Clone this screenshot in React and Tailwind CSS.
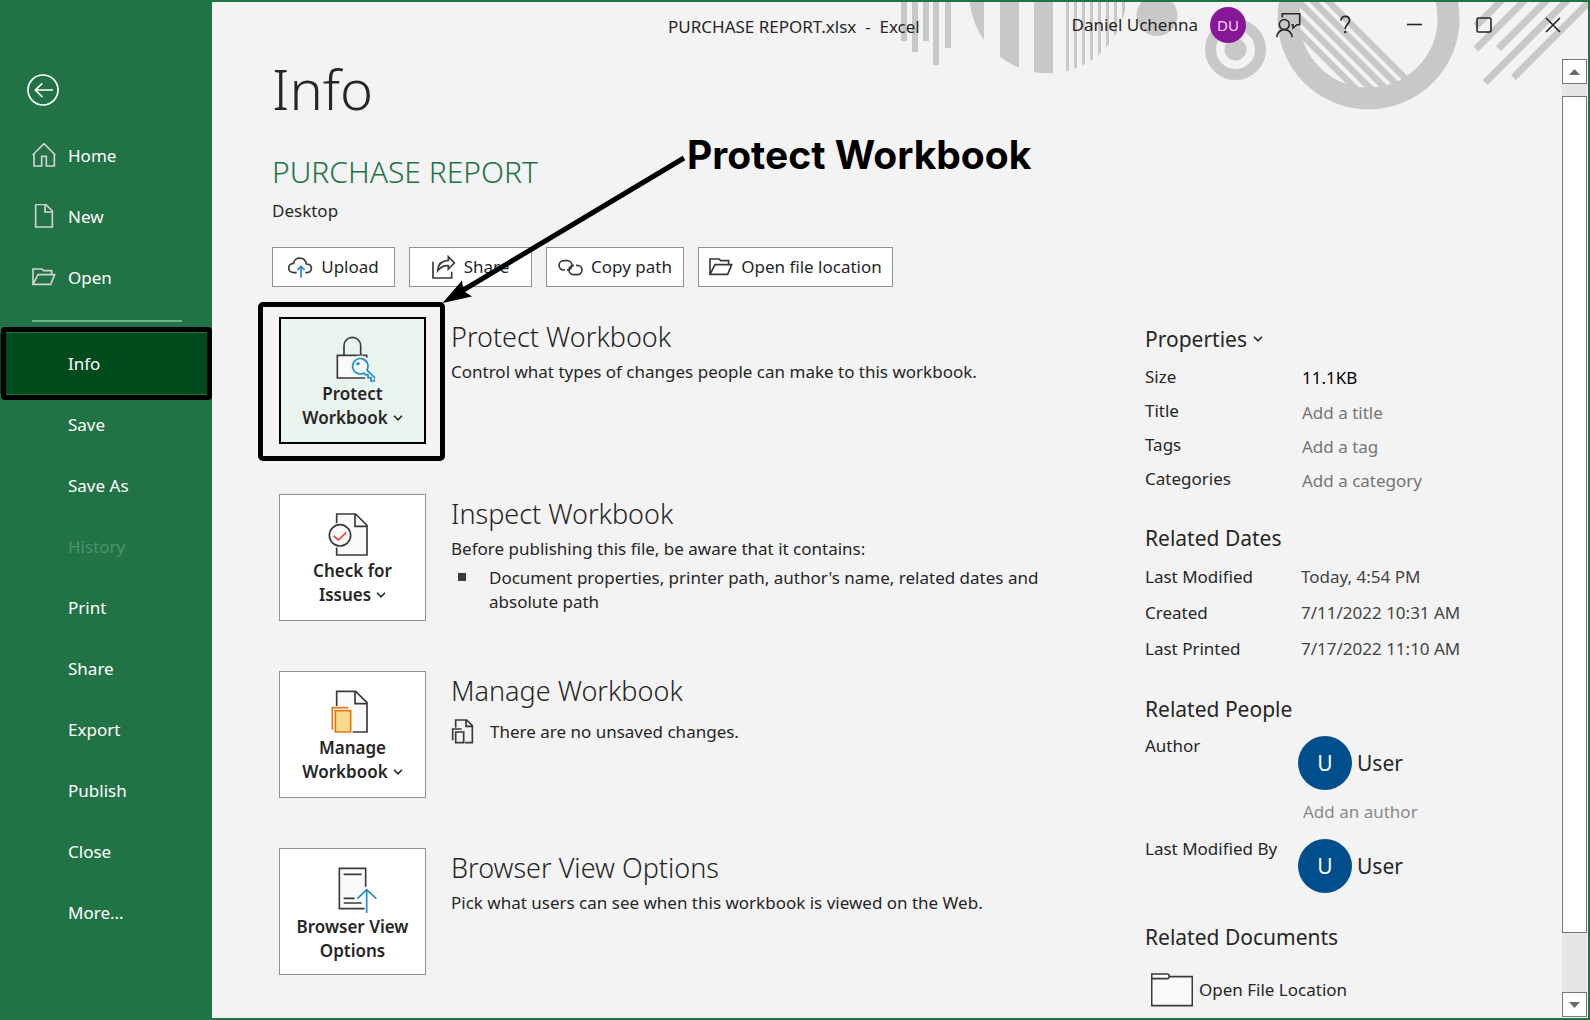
import React from "react";

const INK = "#3b3a39";

function Icon({ box, w, h, children, stroke = INK, sw = 5, className = "" }) {
  return (
    <svg
      viewBox={box}
      width={w}
      height={h}
      fill="none"
      stroke={stroke}
      strokeWidth={sw}
      className={"shrink-0 " + className}
      aria-hidden="true"
    >
      {children}
    </svg>
  );
}

const Chevron = ({ className = "" }) => (
  <svg viewBox="0 0 10 6" width="10" height="6" fill="none" stroke="#262626" strokeWidth="1.6" className={"inline-block align-middle " + className} aria-hidden="true">
    <path d="M1 .8l4 4 4-4" />
  </svg>
);

const BackIcon = () => (
  <Icon box="21 12 96 96" w={32} h={32} stroke="#fff" sw={5}>
    <circle cx="69" cy="60" r="45" />
    <path d="M46 60H99M67 40L46 60L67 81" />
  </Icon>
);
const HomeIcon = () => (
  <Icon box="36 221 72 72" w={24} h={24} stroke="#d2d2d2">
    <path d="M38 257L72 223L106 257M42 253V290H65V261H79V290H103V253" />
  </Icon>
);
const NewIcon = () => (
  <Icon box="36 404 72 72" w={24} h={24} stroke="#d2d2d2">
    <path d="M47 405H77L97 425V473H47ZM75 405V428H97" />
  </Icon>
);
const FolderOpenIcon = ({ stroke = INK }) => (
  <Icon box="1322 53 72 54" w={24} h={18} stroke={stroke}>
    <path d="M1325 102V56H1352L1357 61H1381V72M1325 102L1340 73H1390L1378 102Z" />
  </Icon>
);
const UploadIcon = () => (
  <Icon box="59 56 75 63" w={25} h={21}>
    <path d="M85 103H77C56 103 56 75 76 75C78 54 110 54 114 77C134 77 134 103 116 103H111" fill="#fafafa" />
    <path d="M98 118V84M87 95L98 84L109 95" stroke="#1e8bcd" />
  </Icon>
);
const ShareIcon = () => (
  <Icon box="491 46 72 72" w={24} h={24}>
    <path d="M494 66V115H550V96" />
    <path d="M508 93C509 72 522 63 540 62V51L558 70L540 88V78C524 77 516 83 508 93Z" />
  </Icon>
);
const LinkIcon = () => (
  <Icon box="865 55 75 51" w={25} h={17}>
    <path d="M886 88H882a14 14 0 0 1 0-28h11a14 14 0 0 1 14 14c0 8-6 14-15 14" />
    <path d="M919 74h4a14 14 0 0 1 0 28h-11a14 14 0 0 1-14-14c0-8 6-14 15-14" />
  </Icon>
);
const LockIcon = () => (
  <Icon box="189 286 132 138" w={44} h={46}>
    <path d="M228 343V315a25 25 0 0 1 50 0V343" />
    <path d="M291 412H208V344H296V352" fill="#fafafa" />
    <path d="M252 376a25 25 0 1 1 46 13L323 412V422H309V411H300V402H292L287 399A25 25 0 0 1 252 376Z" fill="#fafafa" stroke="#e9f4ee" strokeWidth="12" />
    <path d="M254 376a23 23 0 1 1 43 12L321 412V421H309V411H300V402H292L288 397A23 23 0 0 1 254 376Z" fill="#fafafa" stroke="#1e8bcd" />
    <circle cx="270" cy="369" r="5" fill="#1e8bcd" stroke="none" />
  </Icon>
);
const CheckDocIcon = () => (
  <Icon box="232 97 150 132" w={50} h={44}>
    <path d="M258 100H315L349 134V223H258Z" fill="#fafafa" />
    <path d="M313 100V137H349" />
    <circle cx="268" cy="164" r="38" fill="#fff" stroke="none" />
    <circle cx="268" cy="164" r="32" fill="#fafafa" />
    <path d="M249 165L263 178L287 155" stroke="#ee4444" />
  </Icon>
);
const ManageDocIcon = () => (
  <Icon box="232 628 150 132" w={50} h={44}>
    <path d="M258 632H315L349 666V754H258Z" fill="#fafafa" />
    <path d="M313 632V669H349" />
    <path d="M240 676H306V760H240Z" fill="#fff" stroke="none" />
    <path d="M245 747V681H293" stroke="#e07a10" />
    <path d="M254 690H300V754H254Z" fill="#f8da8f" stroke="#e07a10" />
  </Icon>
);
const BrowserIcon = () => (
  <Icon box="244 259 126 138" w={42} h={46} className="overflow-visible">
    <path d="M345 318V263H266V384H342" fill="#fafafa" />
    <path d="M279 281H333M279 353H312M279 367H333" />
    <path d="M348 397V328M320 354L348 327L377 354" stroke="#1e8bcd" />
  </Icon>
);
const DraftsIcon = () => (
  <Icon box="603 716 69 75" w={23} h={25}>
    <path d="M617 742V719H650L667 736V787H645M648 719V738H667" />
    <path d="M617 755H641V787H617ZM608 780V746H635" />
  </Icon>
);
const FolderIcon = () => (
  <Icon box="63 876 126 102" w={42} h={34}>
    <path d="M65 879H112Q118 879 118 887H187V974H65Z" fill="#fafafa" />
    <path d="M65 893H112Q117 893 118 887" />
  </Icon>
);

function TitleArt() {
  const thin = [1066, 1074, 1082, 1090, 1098, 1106, 1114, 1122];
  return (
    <svg viewBox="890 2 698 110" width="698" height="110" className="pointer-events-none absolute right-0 top-0" fill="#c8c8c8" aria-hidden="true">
      <defs>
        <clipPath id="disc"><circle cx="1048" cy="-5.3" r="78.5" /></clipPath>
        <clipPath id="inner"><circle cx="1368.5" cy="18.5" r="70" /></clipPath>
      </defs>
      <path d="M901 0h6v41h-6zM912 0h6v52h-6zM923 0h6v41h-6zM933 0h6v65h-6zM945 0h6v48h-6z" />
      <g clipPath="url(#disc)">
        <path d="M960 0h24v80h-24zM1000 0h19v80h-19zM1034 0h19v80h-19z" />
        {thin.map((x) => <rect key={x} x={x} y="0" width="3" height="80" />)}
      </g>
      <circle cx="1157" cy="15.5" r="20.5" />
      <circle cx="1235.5" cy="49.5" r="25" fill="none" stroke="#c8c8c8" strokeWidth="11" />
      <circle cx="1235.5" cy="49.5" r="11" />
      <circle cx="1368.5" cy="18.5" r="80" fill="none" stroke="#c8c8c8" strokeWidth="22" />
      <g clipPath="url(#inner)" stroke="#c8c8c8" strokeWidth="6.5">
        <path d="M1320 -7l120 120M1305 -7l120 120M1290 -7l120 120M1275 -7l120 120M1260 -7l120 120" />
      </g>
      <g stroke="#c8c8c8" strokeWidth="7">
        <path d="M1476 26L1506 -4M1476 49L1529 -4M1498.500 48.500L1551 -4M1485 82.500L1571.500 -4M1513.500 77.500L1595 -4" />
      </g>
    </svg>
  );
}

const topNav = [
  ["Home", HomeIcon],
  ["New", NewIcon],
  ["Open", () => <FolderOpenIcon stroke="#d2d2d2" />],
];
const bottomNav = ["Save", "Save As", "History", "Print", "Share", "Export", "Publish", "Close", "More..."];

function Sidebar() {
  return (
    <nav className="flex w-[212px] shrink-0 flex-col bg-[#217346] text-[17px] text-white">
      <button aria-label="Back" className="ml-[27px] mt-[72px] size-8"><BackIcon /></button>
      <div className="mt-5">
        {topNav.map(([label, I]) => (
          <button key={label} className="flex h-[61px] w-full items-center gap-3 pl-8 pb-1 text-left">
            <I />
            <span className="pt-0.5">{label}</span>
          </button>
        ))}
      </div>
      <hr className="ml-8 mr-[30px] mt-[11px] mb-[11px] border-0 border-t-2 border-[#6fb58c]" />
      <button className="relative h-[61px] w-full bg-[#004b1c] pl-[68px] text-left">
        Info
        <span className="pointer-events-none absolute -top-1.5 -bottom-1.5 left-px right-0 rounded-[4px] border-[5px] border-black" />
      </button>
      {bottomNav.map((label) => (
        <button
          key={label}
          disabled={label === "History"}
          className="h-[61px] w-full pl-[68px] text-left disabled:text-[#4d9069]"
        >
          {label}
        </button>
      ))}
    </nav>
  );
}

function Header() {
  return (
    <header className="relative flex h-[52px] items-start pl-[456px] text-[17px] leading-6 text-[#262626]">
      <TitleArt />
      <div className="relative flex-1 whitespace-pre pt-[13px]">PURCHASE REPORT.xlsx  -  Excel</div>
      <div className="relative flex h-[46px] items-center">
        <span>Daniel Uchenna</span>
        <span className="ml-3 grid size-9 place-items-center rounded-full bg-[#881798] text-[15px] text-[#f6d3f8]">DU</span>
        <button aria-label="Feedback" className="ml-[30px]">
          <Icon box="0 0 25 25" w={25} h={25} stroke="#262626" sw={1.6}>
            <path d="M6.300 4.500V.8H23.700V11.700H21L17 15V11.700H15.500" />
            <circle cx="8.300" cy="11.500" r="5" />
            <path d="M.8 24.300a7.600 7.600 0 0 1 15.300 0" />
          </Icon>
        </button>
        <button aria-label="Help" className="ml-9 w-4">
          <Icon box="0 0 16 20" w={16} h={20} stroke="#262626" sw={1.7}>
            <path d="M4 5.500C4 0 12.500 .2 12.500 5.500C12.500 9 8.200 9.500 8.200 14" />
            <circle cx="8.200" cy="17" r="1.200" fill="#262626" stroke="none" />
          </Icon>
        </button>
        <button aria-label="Minimize" className="ml-[54px]">
          <Icon box="0 0 16 16" w={16} h={16} stroke="#262626" sw={1.6}><path d="M0 7.500H15" /></Icon>
        </button>
        <button aria-label="Maximize" className="ml-[53px]">
          <Icon box="0 0 16 16" w={16} h={16} stroke="#262626" sw={1.6}><rect x="1" y="1" width="14" height="14" rx="1.500" /></Icon>
        </button>
        <button aria-label="Close" className="ml-[53px] mr-[27px]">
          <Icon box="0 0 16 16" w={16} h={16} stroke="#262626" sw={1.6}><path d="M1 1L15 15M15 1L1 15" /></Icon>
        </button>
      </div>
    </header>
  );
}

function Scrollbar() {
  return (
    <div className="mt-[5px] mb-px mr-px flex w-[25px] shrink-0 flex-col bg-[#e6e6e6]">
      <button aria-label="Scroll up" className="grid h-[25px] place-items-center border border-[#777] bg-white">
        <svg viewBox="0 0 11 6" width="11" height="6" fill="#6b6b6b" aria-hidden="true"><path d="M5.500 0L11 6H0z" /></svg>
      </button>
      <div className="flex-1 pt-3 pb-[59px]"><div className="h-full border border-[#777] bg-white" /></div>
      <button aria-label="Scroll down" className="grid h-[25px] place-items-center border border-[#777] bg-white">
        <svg viewBox="0 0 11 6" width="11" height="6" fill="#6b6b6b" aria-hidden="true"><path d="M5.500 6L11 0H0z" /></svg>
      </button>
    </div>
  );
}

const actions = [
  ["Upload", UploadIcon, "w-[123px]"],
  ["Share", ShareIcon, "w-[123px]"],
  ["Copy path", LinkIcon, "w-[138px]"],
  ["Open file location", FolderOpenIcon, "w-[195px]"],
];

function Section({ icon: I, lines, chevron, active, title, children }) {
  return (
    <section className="flex min-h-[127px]">
      <div className="relative h-[127px] w-[147px] shrink-0">
        <button
          className={
            "flex size-full flex-col items-center text-center text-[17px] font-semibold leading-6 " +
            (active ? "border-2 border-black bg-[#e9f4ee] pt-[17px]" : "border border-[#919191] bg-white pt-[18px]")
          }
        >
          <span className={"flex items-start " + (chevron ? "h-[46px]" : "h-12")}><I /></span>
          <span>{lines[0]}</span>
          <span className="flex items-center gap-[5px]">
            {lines[1]}
            {chevron && <Chevron />}
          </span>
        </button>
        {active && (
          <span className="pointer-events-none absolute -bottom-[17px] -left-[21px] -right-[19px] -top-[15px] rounded-[5px] border-[5px] border-black" />
        )}
      </div>
      <div className="ml-[25px] max-w-[590px] pt-0.5 leading-6">
        <h3 className="mb-[5px] text-[27px] font-light leading-9">{title}</h3>
        {children}
      </div>
    </section>
  );
}

function Avatar() {
  return (
    <div className="flex items-center gap-[5px] text-[21px] leading-[54px]">
      <span className="grid size-[54px] place-items-center rounded-full bg-[#004e8c] text-[21px] text-white">U</span>
      User
    </div>
  );
}

const H = ({ children, className = "" }) => (
  <h3 className={"text-[21px] leading-[30px] " + className}>{children}</h3>
);

function Properties() {
  const fields = [["Title", "Add a title"], ["Tags", "Add a tag"], ["Categories", "Add a category"]];
  const dates = [["Last Modified", "Today, 4:54 PM"], ["Created", "7/11/2022 10:31 AM"], ["Last Printed", "7/17/2022 11:10 AM"]];
  return (
    <aside className="w-[417px] shrink-0 pt-[7px]">
      <button className="flex items-center gap-[6px] text-[21px] leading-[30px]">Properties<Chevron /></button>
      <div className="mt-[7px] leading-8">
        <div className="flex h-[34px]"><span className="w-[157px]">Size</span><span className="pt-px text-black">11.1KB</span></div>
        {fields.map(([l, p]) => (
          <label key={l} className="flex h-[34px]">
            <span className="w-[157px]">{l}</span>
            <input placeholder={p} className="h-[34px] w-44 bg-transparent outline-none placeholder:text-[#757575]" />
          </label>
        ))}
      </div>
      <H className="mt-[26px]">Related Dates</H>
      <dl className="mt-[6px] leading-9">
        {dates.map(([l, v]) => (
          <div key={l} className="flex"><dt className="w-[156px]">{l}</dt><dd className="text-[#444]">{v}</dd></div>
        ))}
      </dl>
      <H className="mt-[27px]">Related People</H>
      <div className="mt-[10px] flex leading-6">
        <span className="w-[153px]">Author</span>
        <div className="pt-0.5">
          <Avatar />
          <input aria-label="Add an author" placeholder="Add an author" className="ml-[5px] mt-[10px] block h-6 w-44 bg-transparent outline-none placeholder:text-[#8a8a8a]" />
        </div>
      </div>
      <div className="mt-[13px] flex leading-6">
        <span className="w-[153px]">Last Modified By</span>
        <div className="pt-0.5"><Avatar /></div>
      </div>
      <H className="mt-[29px]">Related Documents</H>
      <button className="ml-[6px] mt-[21px] flex items-center gap-[6px]"><FolderIcon />Open File Location</button>
    </aside>
  );
}

export default function App() {
  return (
    <div className="flex min-h-screen border-y-2 border-r-2 border-[#217346] bg-[#f3f3f3] font-['Noto_Sans',sans-serif] text-[17px] text-[#262626]">
      <Sidebar />
      <div className="flex min-w-0 flex-1 flex-col">
        <Header />
        <div className="flex flex-1">
          <main className="relative min-w-0 flex-1 pl-[60px]">
            <h1 className="pt-0.5 text-[56px] font-light leading-[64px]">Info</h1>
            <h2 className="mt-8 text-[30px] font-light leading-10 text-[#217346]">PURCHASE REPORT</h2>
            <p className="mt-[7px] leading-6">Desktop</p>
            <div className="mt-6 flex gap-[14px]">
              {actions.map(([label, I, w]) => (
                <button key={label} className={"flex h-10 items-center justify-center gap-2 whitespace-nowrap border border-[#919191] bg-white " + w}>
                  <I />
                  {label}
                </button>
              ))}
            </div>
            <div className="mt-[30px] flex pl-[7px]">
              <div className="flex min-w-0 flex-1 flex-col gap-[50px] pb-10">
                <Section icon={LockIcon} lines={["Protect", "Workbook"]} chevron active title="Protect Workbook">
                  <p>Control what types of changes people can make to this workbook.</p>
                </Section>
                <Section icon={CheckDocIcon} lines={["Check for", "Issues"]} chevron title="Inspect Workbook">
                  <p>Before publishing this file, be aware that it contains:</p>
                  <ul className="mt-[5px]">
                    <li className="flex">
                      <span className="ml-[7px] mr-[23px] mt-[7px] size-2 shrink-0 bg-[#3b3a39]" />
                      Document properties, printer path, author's name, related dates and absolute path
                    </li>
                  </ul>
                </Section>
                <Section icon={ManageDocIcon} lines={["Manage", "Workbook"]} chevron title="Manage Workbook">
                  <p className="mt-[10px] flex items-center gap-4"><DraftsIcon />There are no unsaved changes.</p>
                </Section>
                <Section icon={BrowserIcon} lines={["Browser View", "Options"]} title="Browser View Options">
                  <p>Pick what users can see when this workbook is viewed on the Web.</p>
                </Section>
              </div>
              <Properties />
            </div>
            <div className="pointer-events-none absolute left-[475px] top-[76px] whitespace-nowrap font-['Inter',sans-serif] text-[39px] font-bold leading-[50px] text-black">
              Protect Workbook
            </div>
            <svg viewBox="440 150 250 160" width="250" height="160" className="pointer-events-none absolute left-[228px] top-[96px]" aria-hidden="true">
              <path d="M684 158L460 292" stroke="#000" strokeWidth="5" />
              <path d="M442.500 303L462 280.500L463.500 291L472 296.500Z" fill="#000" />
            </svg>
          </main>
          <Scrollbar />
        </div>
      </div>
    </div>
  );
}
